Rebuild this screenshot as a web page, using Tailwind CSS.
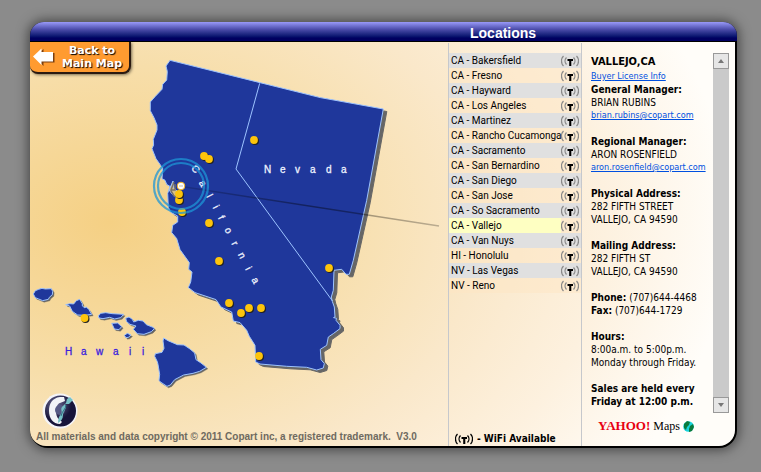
<!DOCTYPE html>
<html lang="en">
<head>
<meta charset="utf-8">
<meta name="viewport" content="width=device-width, initial-scale=1">
<title>Locations</title>
<script src="https://cdn.jsdelivr.net/npm/@tailwindcss/browser@4"></script>
</head>
<body class="bg-[#8b8b8b] font-['Tahoma','DejaVu_Sans_Condensed','DejaVu_Sans',sans-serif] text-[10px] leading-[13px] text-black">
<svg class="hidden" aria-hidden="true">
  <symbol id="wifi" viewBox="1 0 18 12">
    <g fill="none" stroke="currentColor" stroke-width="1.3"><path d="M3.500 1C.8 3.600.8 8.400 3.500 11M6.500 2.500C4.600 4.500 4.600 7.500 6.500 9.500M16.500 1c2.700 2.600 2.700 7.400 0 10M13.500 2.500c1.900 2 1.900 5 0 7"/></g>
    <path d="M7.500 4h5.500v2h-1.700v5H9.200V6H7.500z" fill="#000"/>
  </symbol>
</svg>
<main class="flex min-h-screen pt-[22px] pr-6 pb-6 pl-[30px]">
  <section class="flex flex-1 flex-col rounded-t-[14px] rounded-b-[18px] bg-black pr-[2px] pb-[2px] shadow-[0_0_12px_2px_rgba(0,0,0,0.5)]">
    <header class="-mr-[2px] grid h-5 grid-cols-[minmax(0,1fr)_134px_155px] items-center rounded-t-[14px] border-b border-black bg-linear-to-b from-[#9a9af8] via-[#4a4aa8] via-40% to-[#000060] to-85%">
      <h1 class="col-start-2 pl-[22px] pt-[3px] font-['Liberation_Sans',Arial,sans-serif] text-[14px] leading-4 font-bold text-white">Locations</h1>
    </header>
    <div class="grid flex-1 grid-cols-[minmax(0,1fr)_134px_153px] overflow-hidden rounded-b-[16px] bg-[radial-gradient(620px_450px_at_80px_180px,#f5d084,#f7deaa_35%,#fae8ca_60%,#fdf1df_80%,#fffdf9)]">
      <div class="relative">
        <svg class="block w-full" viewBox="30 42 418 404" role="img" aria-label="Map of California, Nevada and Hawaii">
          <defs>
            <path id="land" d="M170 60.300L166 66l1.300 5.500-.6 8.500-4 4.300-.7 5-7 7.400-4.700 5.300v8.700l3.700 7 3 7.300v5l-3.700 9.300.3 5.700-1.600 3.700 4 10 4.700 6.700 2 2.300-.7 11 3 1.500 1.700 4.200 3.300 2-2.300 7 .6 14 2.700 5 6.700 3.700v5.900l-5 3.300-1 7.300 5 6 3.300 11 9.300 13-.6 6.700 3.300 2.700-1.300 10-2.400 5.600 6.700 5 21 7 5 7.400 10.700 5 1.600 9 6.700 1.600 6.700 7.700 2.600 6 5.700 9 .7 16.700 4.300 2 26.700 2.300 20 1 10 2.700 6.600-2 1-4.400-3.300-4-.7-10.300 6.400-4 1.600-8.300 5-3.400 6.700-5v-3.300l-4-5 .5-2-3-.7 1.500-.6-.7-10-2-5.700-1-4.300 2-6.700.7-20 7.700-1 4.300 5h3.300l4-14 13.400-60 16.600-91.300-63-11.400z"/>
            <g id="islands" transform="translate(20 270) scale(.33333)">
              <path d="M40 72l6-10 10-4 10-3 10 2 18-1 4 8-1 10-9 8-3 6-17 4-12-5-10-4zM137 104l12-3 12 1 8-10 10-4 8 13v7l8 6 3-4 9 9 8 14-20 3-22-1-16-11-8-16zM235 138l7-8 15-2 20 3 34 2-9 10-18 4-15-5-20 4-12-2zM275 160l18-1 12 11-8 9-14-2-4-9zM313 196l9-6 11 5-8 7-7 1zM317 145l10-4 10 7 4 8 14-5 14 2 10 11 20 8 4 4-9 9-22 8-20-2-12-13 8-10-18-5-10-8zM431 204l13 8 28 12 20 1 18 12 14 12 4 20 15 10 16 13-20 12-20 6-28 5-27 14-13 16-10 4-21-14-3-4 2-18-5-30-2-8-8-16 2-8 20-4 6-12-3-22z"/>
            </g>
            <linearGradient id="leader" x1="185" y1="187" x2="439" y2="226" gradientUnits="userSpaceOnUse"><stop stop-color="#000" stop-opacity=".15"/><stop offset=".5" stop-color="#000" stop-opacity=".4"/><stop offset="1" stop-color="#000" stop-opacity=".25"/></linearGradient>
            <g id="pin"><circle cx="1" cy="1" r="4" fill="#222"/><circle r="3.900" fill="#fdc40c"/></g>
          </defs>
          <g fill="#666" stroke="#666"><use href="#land" x="3.500" y="2.500"/><use href="#islands" x="1.500" y="1.500"/></g>
          <use href="#land" fill="#1f379b" stroke="#9dc3ff"/>
          <g fill="#1f379b" stroke="#9dc3ff" stroke-width="3"><use href="#islands"/></g>
          <path d="M259.700 83.300L236 169l96.500 132" fill="none" stroke="#9dc3ff"/>
          <path d="M169 190l4-9 1 7 4 4-1 6-5-4z" fill="#d9c184" stroke="#9dc3ff"/><path d="M174 182l-3 8h4v-6M171 191l3 5 3 1" fill="none" stroke="#77716a" stroke-width="1.500"/>
          <g font-family="Liberation Sans Narrow, Liberation Sans, Arial, sans-serif" font-size="10">
            <text x="264 280 295 310 326 341" y="173" fill="#eef2ff" stroke="#eef2ff" stroke-width=".3">Nevada</text>
            <text x="65 81 96 113 129 142" y="355" fill="#3a22dd" stroke="#3a22dd" stroke-width=".3">Hawaii</text>
            <g fill="#eef2ff" stroke="#eef2ff" stroke-width=".3" text-anchor="middle">
              <text transform="translate(193 171) rotate(52)">C</text><text transform="translate(200 185) rotate(58)">a</text><text transform="translate(206.500 197.500) rotate(62)">l</text><text transform="translate(213 208.500) rotate(62)">i</text><text transform="translate(218.500 219) rotate(62)">f</text><text transform="translate(225.500 232) rotate(62)">o</text><text transform="translate(232 245) rotate(62)">r</text><text transform="translate(239 257) rotate(62)">n</text><text transform="translate(245.500 270) rotate(62)">i</text><text transform="translate(252.500 282) rotate(62)">a</text>
            </g>
          </g>
          <use href="#pin" x="254" y="140"/><use href="#pin" x="204" y="156"/><use href="#pin" x="209" y="159"/>
          <use href="#pin" x="179" y="200"/><use href="#pin" x="179" y="194"/><use href="#pin" x="182" y="212"/>
          <use href="#pin" x="209" y="223"/><use href="#pin" x="219" y="261"/><use href="#pin" x="329" y="268"/>
          <use href="#pin" x="229" y="303"/><use href="#pin" x="241" y="313"/><use href="#pin" x="249" y="308"/>
          <use href="#pin" x="261" y="308"/><use href="#pin" x="259" y="356"/><use href="#pin" x="84.500" y="318"/>
          <circle cx="181" cy="186" r="3.800" fill="#fff" stroke="#f0b323"/><path d="M179 186h4" stroke="#bbb"/>
          <path d="M185 187l254 39" stroke="url(#leader)" stroke-width="1.500"/>
          <g fill="none" stroke="#1e96d6" stroke-opacity=".75" stroke-width="2.200"><circle cx="181" cy="186" r="27"/><circle cx="181" cy="186" r="23"/></g>
        </svg>
        <button class="absolute top-0 left-0 flex h-8 w-[101px] items-center gap-[7px] rounded-b-lg border-r-2 border-b-2 border-[#2b1a10] bg-[#ff9b30] pl-[3px] font-['DejaVu_Sans',sans-serif] text-[11px] leading-[13px] font-bold text-white shadow-[1px_1px_3px_rgba(0,0,0,0.5)]">
          <svg class="w-[22px] shrink-0" viewBox="0 0 22 18" aria-hidden="true"><path d="M1 8.500L9.500.5V4.500H20.500V14H9.500v3.500z" fill="#7a3f10" transform="translate(1 .5)"/><path d="M0 8.500L8.500.5V4H20v9.500H8.500v3.500z" fill="#fff"/></svg>
          <span class="text-center whitespace-nowrap [text-shadow:1px_1px_1px_#000]">Back to<br>Main Map</span>
        </button>
        <footer class="absolute bottom-px left-[6px] font-['Liberation_Sans',Arial,sans-serif] leading-4 font-bold text-[#6f6a60]">
          <svg class="ml-[6px] block w-9" viewBox="0 0 36 36" aria-hidden="true">
            <defs><radialGradient id="orb" cx=".35" cy=".3"><stop stop-color="#6d6c94"/><stop offset="1" stop-color="#17143a"/></radialGradient></defs>
            <circle cx="18" cy="18" r="17.500" fill="#f4f4f8"/><circle cx="18.500" cy="18" r="15.500" fill="url(#orb)"/>
            <path d="M18 4C10 5 7 11 7 18s4 13 11 13l2-2-3-3c-4-2-4-15 1-16l5-2-1-4z" fill="#f1f3f7"/>
            <circle cx="18" cy="17" r="5" fill="#565a85"/>
            <path d="M28 4l3 3-4 4-4 0c3 4-2 7-2 11s-2 6-5 8c0-4 1-7 3-9 2-3-1-4 1-7l4-4 1-4z" fill="#76c0c6"/><path d="M24 12c0 4-4 6-5 11" fill="none" stroke="#2e6b80"/>
          </svg>
          <p class="whitespace-pre">All materials and data copyright © 2011 Copart inc, a registered trademark.  V3.0</p>
        </footer>
      </div>
      <div class="mt-px flex flex-col border-x border-[#c6c8cc] pt-[10px]">
        <ul class="font-['Roboto',sans-serif] leading-[15px] whitespace-nowrap [&_button]:min-w-0 [&_button]:flex-1 [&_button]:pl-[2px] [&_button]:text-left [&_li]:flex [&_li]:h-[15px] [&_li]:items-center [&_li]:pr-[2px] [&_li:nth-child(odd)]:bg-[#e0e0e0] [&_li:nth-child(even)]:bg-[#fde6c4]/50 [&_svg]:h-3 [&_svg]:w-[18px] [&_svg]:shrink-0 [&_svg]:text-[#8a8a8a]">
          <li><button>CA - Bakersfield</button><svg><use href="#wifi"/></svg></li>
          <li><button>CA - Fresno</button><svg><use href="#wifi"/></svg></li>
          <li><button>CA - Hayward</button><svg><use href="#wifi"/></svg></li>
          <li><button>CA - Los Angeles</button><svg><use href="#wifi"/></svg></li>
          <li><button>CA - Martinez</button><svg><use href="#wifi"/></svg></li>
          <li><button>CA - Rancho Cucamonga</button><svg><use href="#wifi"/></svg></li>
          <li><button>CA - Sacramento</button><svg><use href="#wifi"/></svg></li>
          <li><button>CA - San Bernardino</button><svg><use href="#wifi"/></svg></li>
          <li><button>CA - San Diego</button><svg><use href="#wifi"/></svg></li>
          <li><button>CA - San Jose</button><svg><use href="#wifi"/></svg></li>
          <li><button>CA - So Sacramento</button><svg><use href="#wifi"/></svg></li>
          <li><button class="bg-[#feffc2]">CA - Vallejo</button><svg><use href="#wifi"/></svg></li>
          <li><button>CA - Van Nuys</button><svg><use href="#wifi"/></svg></li>
          <li><button>HI - Honolulu</button><svg><use href="#wifi"/></svg></li>
          <li><button>NV - Las Vegas</button><svg><use href="#wifi"/></svg></li>
          <li><button>NV - Reno</button><svg><use href="#wifi"/></svg></li>
        </ul>
        <p class="mt-auto flex items-center gap-1 pb-px pl-[6px] font-bold"><svg class="h-3 w-[18px]"><use href="#wifi"/></svg>- WiFi Available</p>
      </div>
      <div class="flex flex-col pt-[11px]">
        <div class="flex pr-[6px]">
          <div class="min-w-0 flex-1 pt-px pb-[5px] pl-[9px] whitespace-nowrap [&_a]:text-[9px] [&_a]:text-[#0050e0] [&_a]:underline [&_h3]:font-bold [&_p]:mb-[13px]">
            <h2 class="text-[11px] leading-4 font-bold">VALLEJO,CA</h2>
            <a class="block" href="#license">Buyer License Info</a>
            <h3>General Manager:</h3><p>BRIAN RUBINS<a class="block" href="mailto:brian.rubins@copart.com">brian.rubins@copart.com</a></p>
            <h3>Regional Manager:</h3><p>ARON ROSENFIELD<a class="block" href="mailto:aron.rosenfield@copart.com">aron.rosenfield@copart.com</a></p>
            <h3>Physical Address:</h3><p>282 FIFTH STREET<br>VALLEJO, CA 94590</p>
            <h3>Mailing Address:</h3><p>282 FIFTH ST<br>VALLEJO, CA 94590</p>
            <p><b>Phone:</b> (707)644-4468<br><b>Fax:</b> (707)644-1729</p>
            <h3>Hours:</h3><p>8:00a.m. to 5:00p.m.<br>Monday through Friday.</p>
            <h3>Sales are held every<br>Friday at 12:00 p.m.</h3>
          </div>
          <div class="flex w-4 shrink-0 flex-col justify-between bg-[#cacaca]">
            <button aria-label="Scroll up" class="flex h-4 items-center justify-center border border-[#999] bg-[#e6e6e6]"><svg class="h-1 w-[6px]" viewBox="0 0 6 4"><path d="M0 4l3-4 3 4z" fill="#777"/></svg></button>
            <button aria-label="Scroll down" class="flex h-4 items-center justify-center border border-[#999] bg-[#e6e6e6]"><svg class="h-1 w-[6px]" viewBox="0 0 6 4"><path d="M0 0h6L3 4z" fill="#777"/></svg></button>
          </div>
        </div>
        <a href="#maps" class="mt-auto mb-3 ml-4 flex items-center gap-[3px] font-['Liberation_Serif',serif] leading-[14px]"><b class="text-[13px] text-[#e80010]">YAHOO!</b><span class="text-xs">Maps</span><svg class="w-[11px]" viewBox="0 0 11 11" aria-hidden="true"><circle cx="5.500" cy="5.500" r="5.300" fill="#19d3dc"/><path d="M1 3l3-3 3 1-1 3-2 2-1 3-2-2zM7 5l3-2 1 3-2 4-3 1V8z" fill="#0a7a3c"/></svg></a>
      </div>
    </div>
  </section>
</main>
</body>
</html>
